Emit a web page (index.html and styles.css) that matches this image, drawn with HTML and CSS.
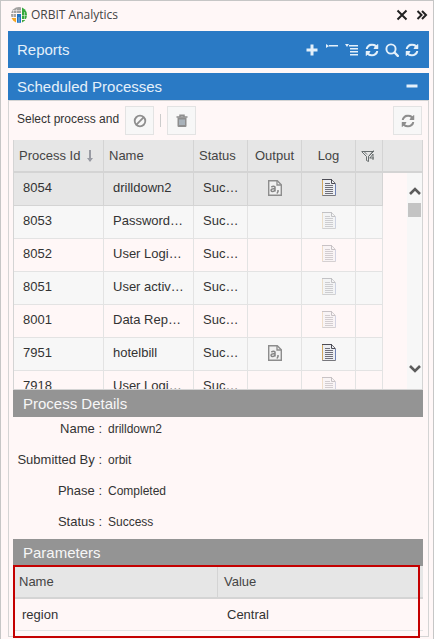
FILE: index.html
```html
<!DOCTYPE html>
<html lang="en">
<head>
<meta charset="utf-8">
<meta name="viewport" content="width=device-width, initial-scale=1">
<title>ORBIT Analytics</title>
<link rel="stylesheet" href="styles.css">
</head>
<body>
<svg class="defs" aria-hidden="true">
  <symbol id="refresh" viewBox="0 0 1536 1536"><path fill="currentColor" d="M1511 928q0 5-1 7-64 268-268 434.500t-478 166.500q-146 0-282.500-55t-243.500-157l-129 129q-19 19-45 19t-45-19-19-45v-448q0-26 19-45t45-19h448q26 0 45 19t19 45-19 45l-137 137q71 66 161 102t187 36q134 0 250-65t186-179q11-17 53-117 8-23 30-23h192q13 0 22.500 9.500t9.500 22.500zm25-800v448q0 26-19 45t-45 19h-448q-26 0-45-19t-19-45 19-45l138-138q-148-137-349-137-134 0-250 65t-186 179q-11 17-53 117-8 23-30 23h-199q-13 0-22.500-9.500t-9.500-22.500v-7q65-268 270-434.500t480-166.500q146 0 284 55.500t245 156.500l130-129q19-19 45-19t45 19 19 45z"/></symbol>
  <symbol id="log" viewBox="0 0 14 17">
    <path d="M.5.5h9l4 4v12H.5z" fill="#eceef2" stroke="#77777c"/>
    <path d="M.5 1v15" stroke="#d0a862"/>
    <path d="M13.500 5v11" stroke="#6f83b5"/>
    <path d="M0 .5h10M9.500 1v3.500H13" stroke="#4c4c55" fill="none"/>
    <path d="M3 4.500h5M3 6.500h8M3 8.500h8M3 10.500h8M3 12.500h8M3 14.500h8" stroke="#70707a"/>
  </symbol>
  <symbol id="csv" viewBox="0 0 14 16">
    <path d="M.7.700h8.600l4 4v10.600H.7z" fill="#f1f1f1" stroke="#8d8d8d" stroke-width="1.400"/>
    <path d="M9 1v4h4" fill="none" stroke="#8d8d8d" stroke-width="1.300"/>
    <path d="M3.300 7q2.500-1.500 3.700 0v4.500M7 8.800c-3-.4-4.200.5-3.900 1.800.4 1.500 3 1.200 3.900-.4M10 10v1.500l-1 2" fill="none" stroke="#858585" stroke-width="1.500"/>
  </symbol>
</svg>
<main class="window">
  <header class="titlebar">
    <svg class="logo" viewBox="0 0 16 16" aria-hidden="true">
      <clipPath id="globe"><circle cx="8" cy="8" r="8"/></clipPath>
      <g clip-path="url(#globe)">
        <path fill="#a3a2a1" d="M0 0h10v6H0zM0 7h5v3H0z"/>
        <path fill="#36a93e" d="M11 0h5v12h-5z"/>
        <path fill="#f5a623" d="M0 11h5v5H0z"/>
        <path fill="#1f74c2" d="M6 7h4v9H6z"/>
        <path fill="#46aa44" d="M11 13h4v3h-4z"/>
        <path d="M5.500 2v12M10.500 0v16M2.500 3v7M13.500 5v7M0 6.500h5M11 8.500h5M2 3.500h8M0 10.500h5M8 10v6" stroke="#fff7f7" stroke-width=".5"/>
      </g>
    </svg>
    <h1 class="app-name">ORBIT Analytics</h1>
    <button class="icon-btn" aria-label="Close"><svg viewBox="0 0 14 14"><path d="M2.500 2.500l9 9M11.500 2.500l-9 9" stroke="#222" stroke-width="2"/></svg></button>
    <button class="icon-btn" aria-label="Collapse pane"><svg viewBox="0 0 14 14"><path d="M2.500 3l4 4-4 4M7 3l4 4-4 4" fill="none" stroke="#222" stroke-width="2"/></svg></button>
  </header>

  <div class="bar reports">
    <h2 class="bar-title">Reports</h2>
    <button class="icon-btn" aria-label="Add"><svg viewBox="0 0 14 14"><path d="M7 1.500v11M1.500 7h11" stroke="currentColor" stroke-width="3"/></svg></button>
    <button class="icon-btn" aria-label="Collapse all"><svg viewBox="0 0 14 14"><path d="M1 1v4l3-2zM4 2h9v1.500H4z" fill="currentColor"/></svg></button>
    <button class="icon-btn" aria-label="Expand all"><svg viewBox="0 0 14 14"><path d="M0 1h4L2 4zM4 2h9v1.500H4zM5 5h8v1.500H5zM5 8h8v1.500H5zM5 11h8v1.500H5z" fill="currentColor"/></svg></button>
    <button class="icon-btn" aria-label="Refresh reports"><svg viewBox="0 0 14 14"><use href="#refresh" x="0.500" y="0.500" width="13" height="13"/></svg></button>
    <button class="icon-btn" aria-label="Search"><svg viewBox="0 0 14 14"><circle cx="6" cy="6" r="4.600" fill="none" stroke="currentColor" stroke-width="1.900"/><path d="M9.500 9.500l3.300 3.300" stroke="currentColor" stroke-width="2.400" stroke-linecap="round"/></svg></button>
    <button class="icon-btn" aria-label="Reload"><svg viewBox="0 0 14 14"><use href="#refresh" x="0.500" y="0.500" width="13" height="13"/></svg></button>
  </div>

  <div class="bar scheduled">
    <h2 class="bar-title">Scheduled Processes</h2>
    <button class="icon-btn" aria-label="Minimize"><svg viewBox="0 0 14 14"><path d="M1.500 6h11" stroke="currentColor" stroke-width="3"/></svg></button>
  </div>

  <section class="panel">
    <div class="toolbar">
      <span class="hint">Select process and</span>
      <button class="tool" aria-label="Cancel process"><svg viewBox="0 0 14 14"><circle cx="7" cy="7" r="5.300" fill="none" stroke="currentColor" stroke-width="1.800"/><path d="M3.200 10.800l7.600-7.600" stroke="currentColor" stroke-width="1.800"/></svg></button>
      <span class="divider"></span>
      <button class="tool" aria-label="Delete process"><svg viewBox="0 0 14 14"><path d="M5 2.500V1.200h4v1.300M1.500 3h11" fill="none" stroke="currentColor" stroke-width="1.500"/><path d="M2.500 3.500h9v8.300q0 1.200-1 1.200h-7q-1 0-1-1.200z" fill="currentColor"/><path d="M5 5.500v5.500M7 5.500v5.500M9 5.500v5.500" stroke="#c3d6e6"/></svg></button>
      <button class="tool last" aria-label="Refresh processes"><svg viewBox="0 0 14 14"><use href="#refresh" x="0.500" y="0.500" width="13" height="13"/></svg></button>
    </div>

    <div class="grid-wrap">
      <table class="grid">
        <colgroup><col class="c-id"><col class="c-name"><col class="c-mid"><col class="c-mid"><col class="c-mid"><col class="c-filter"><col></colgroup>
        <thead><tr>
          <th>Process Id <svg class="sort" viewBox="0 0 6 12" aria-label="Sorted descending"><path d="M3 0v11" stroke="#999ba3" stroke-width="2"/><path d="M0 8h6l-3 4z" fill="#999ba3"/></svg></th>
          <th>Name</th><th>Status</th><th class="mid">Output</th><th class="mid">Log</th>
          <th class="mid"><svg class="filter" viewBox="0 0 14 12" aria-label="Clear filter"><path d="M.5 1.500H13M1 2l4.500 4.500v4l2 1V6.500L12 2M3 1.500l3 3M12.500.5l-5 6M9 8l3-4v6M8.500 8H13" fill="none" stroke="#5b6263" stroke-width=".9"/></svg></th><th></th>
        </tr></thead>
        <tbody>
          <tr class="selected"><td>8054</td><td>drilldown2</td><td>Suc…</td><td class="mid"><svg class="csv"><use href="#csv"/></svg></td><td class="mid"><svg class="log"><use href="#log"/></svg></td><td></td><td class="rest"></td></tr>
          <tr><td>8053</td><td>Password…</td><td>Suc…</td><td></td><td class="mid"><svg class="log off"><use href="#log"/></svg></td><td></td><td class="rest"></td></tr>
          <tr><td>8052</td><td>User Logi…</td><td>Suc…</td><td></td><td class="mid"><svg class="log off"><use href="#log"/></svg></td><td></td><td class="rest"></td></tr>
          <tr><td>8051</td><td>User activ…</td><td>Suc…</td><td></td><td class="mid"><svg class="log off"><use href="#log"/></svg></td><td></td><td class="rest"></td></tr>
          <tr><td>8001</td><td>Data Rep…</td><td>Suc…</td><td></td><td class="mid"><svg class="log off"><use href="#log"/></svg></td><td></td><td class="rest"></td></tr>
          <tr><td>7951</td><td>hotelbill</td><td>Suc…</td><td class="mid"><svg class="csv"><use href="#csv"/></svg></td><td class="mid"><svg class="log"><use href="#log"/></svg></td><td></td><td class="rest"></td></tr>
          <tr><td>7918</td><td>User Logi…</td><td>Suc…</td><td></td><td class="mid"><svg class="log off"><use href="#log"/></svg></td><td></td><td class="rest"></td></tr>
        </tbody>
      </table>
      <div class="scrollbar" aria-hidden="true">
        <svg class="arrow" viewBox="0 0 12 8"><path d="M1 7l5-5 5 5" fill="none" stroke="#5c5c5c" stroke-width="2.600"/></svg>
        <span class="thumb"></span>
        <svg class="arrow down" viewBox="0 0 12 8"><path d="M1 1l5 5 5-5" fill="none" stroke="#5c5c5c" stroke-width="2.600"/></svg>
      </div>
    </div>

    <h3 class="section">Process Details</h3>
    <dl class="details">
      <dt>Name :</dt><dd>drilldown2</dd>
      <dt>Submitted By :</dt><dd>orbit</dd>
      <dt>Phase :</dt><dd>Completed</dd>
      <dt>Status :</dt><dd>Success</dd>
    </dl>

    <h3 class="section">Parameters</h3>
    <div class="params-wrap">
      <table class="params">
        <thead><tr><th>Name</th><th>Value</th></tr></thead>
        <tbody><tr><td>region</td><td>Central</td></tr></tbody>
      </table>
      <span class="highlight"></span>
    </div>
  </section>
</main>
</body>
</html>
```
FILE: styles.css
```css
* { box-sizing: border-box; }

body {
  margin: 0;
  background: #fff7f7;
  color: #333;
  font: 13px/16px "Liberation Sans", Arial, sans-serif;
}

h1, h2, h3, dl, dd { margin: 0; font-weight: normal; }
svg { display: block; }
.defs { position: absolute; width: 0; height: 0; }

.window {
  min-height: 100vh;
  padding: 0 4px 2px 7px;
  border: 1px solid #c6c6c6;
}

.titlebar {
  display: flex;
  align-items: center;
  gap: 6px;
  height: 28px;
  margin-bottom: 2px;
  padding-left: 3px;
}
.titlebar .logo { width: 16px; height: 16px; margin-right: -2px; }
.app-name {
  flex: 1;
  color: #444;
  font: 12px/16px "Open Sans", "Noto Sans", sans-serif;
}

.icon-btn {
  width: 14px;
  height: 14px;
  padding: 0;
  border: 0;
  background: none;
  color: inherit;
}

.bar {
  display: flex;
  align-items: center;
  gap: 6px;
  padding: 0 10px 0 9px;
  background: #2a7ac5;
  color: #e4f0fa;
}
.bar-title { flex: 1; font-size: 15px; line-height: 18px; }
.reports { height: 37px; margin-bottom: 5px; }
.scheduled { height: 27px; }

.panel {
  padding: 0 5px 5px 4px;
  border: 1px solid #d4d4d4;
}

.toolbar {
  display: flex;
  align-items: center;
  gap: 6px;
  height: 39px;
  padding: 0 1px 0 4px;
}
.hint { font-size: 12px; padding-bottom: 4px; }
.tool {
  display: grid;
  place-items: center;
  width: 29px;
  height: 29px;
  padding: 0;
  border: 1px solid #e3e3e3;
  background: #f7f7f7;
  color: #8e8e8e;
}
.tool svg { width: 14px; height: 14px; }
.divider { width: 1px; height: 13px; background: #ccc; }
.last { margin-left: auto; }

.grid-wrap {
  position: relative;
  height: 250px;
  overflow: hidden;
  border: 1px solid #d4d4d4;
  border-width: 0 1px 1px;
}
.grid, .params {
  width: 100%;
  table-layout: fixed;
  border-collapse: separate;
  border-spacing: 0;
}
.c-id, .c-name { width: 90px; }
.c-mid { width: 54px; }
.c-filter { width: 27px; }

th {
  height: 33px;
  padding: 0 0 0 5px;
  border-right: 1px solid #d4d4d4;
  border-bottom: 2px solid #d4d4d4;
  background: #e6e6e6;
  color: #444;
  font-weight: normal;
  text-align: left;
  white-space: nowrap;
}
th:last-child { border-right: 0; }
td {
  height: 33px;
  padding: 0 0 3px 9px;
  border-right: 1px solid #e3e3e3;
  border-bottom: 1px solid #e3e3e3;
  white-space: nowrap;
}
.grid tbody tr:nth-child(even) td { background: #f7f7f7; }
.grid .selected td {
  border-color: #d4d4d4;
  background: #e6e6e6;
}
.grid tbody tr .rest.rest { border: 0; background: none; }
.mid { padding-left: 0; text-align: center; }
.mid svg { margin: 0 auto; }
.sort {
  display: inline-block;
  width: 6px;
  height: 12px;
  margin-left: 3px;
  vertical-align: middle;
}
.mid .filter { width: 14px; height: 12px; margin-left: 5px; }
.csv { width: 14px; height: 16px; }
.log { width: 14px; height: 17px; }
.off { opacity: .3; }

.scrollbar {
  position: absolute;
  top: 33px;
  right: 0;
  bottom: 0;
  display: flex;
  flex-direction: column;
  align-items: center;
  width: 15px;
  padding: 14px 0 16px;
  background: #f7f7f7;
}
.arrow { width: 12px; height: 8px; }
.thumb { width: 13px; height: 14px; margin-top: 8px; background: #c4c4c4; }
.down { margin-top: auto; }

.section {
  padding: 0 10px;
  background: #949494;
  color: #f7f7f7;
  font-size: 15px;
  line-height: 27px;
}

.details {
  display: grid;
  grid-template-columns: 89px 1fr;
  grid-auto-rows: 16px;
  align-items: center;
  gap: 15px 6px;
  padding: 4px 0 9px;
}
.details dt { text-align: right; white-space: nowrap; }
.details dd { font-size: 12px; }

.params-wrap { position: relative; }
.params th { padding-left: 6px; }
.params td { height: 32px; padding-bottom: 0; border-right: 0; }
.highlight {
  position: absolute;
  inset: -1px 3px -7px 0;
  border: 2px solid #c40000;
}
```
